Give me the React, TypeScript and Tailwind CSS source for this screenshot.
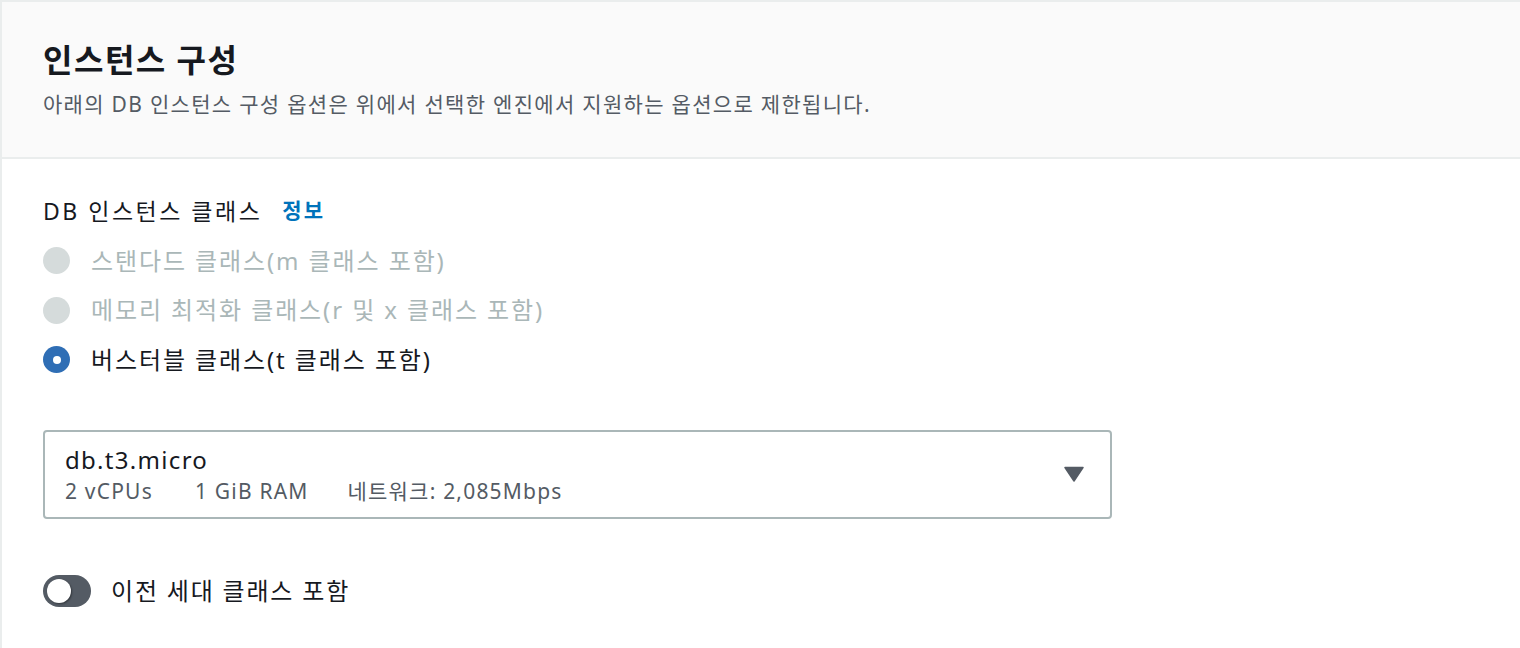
const font = 'font-["Noto_Sans","Noto_Sans_CJK_KR",sans-serif]'

const Radio = ({ label, checked, disabled }: { label: string; checked?: boolean; disabled?: boolean }) => (
    <div className="flex items-center h-[49.5px]">
        {checked ? (
            <span className="w-[27px] h-[27px] rounded-full bg-[#2f6eb5] flex items-center justify-center">
                <span className="w-[8px] h-[8px] rounded-full bg-white" />
            </span>
        ) : (
            <span className="w-[27px] h-[27px] rounded-full bg-[#d5dbdb]" />
        )}
        <span
            className={`ml-[21px] text-[24px] tracking-[1.9px] ${disabled ? 'text-[#aab7b8]' : 'text-[#16191f]'}`}
        >
            {label}
        </span>
    </div>
)

export default function App() {
    return (
        <div className={`${font} w-[1520px] h-[648px] bg-white border-l-2 border-t-2 border-[#eaeded] overflow-hidden`}>
            <header className="bg-[#fafafa] border-b-2 border-[#eaeded] h-[157px] pl-[41px] pt-[34px]">
                <h2 className="text-[32px] font-bold text-[#16191f] leading-[48px] tracking-[1.5px]">인스턴스 구성</h2>
                <p className="text-[21px] text-[#545b64] leading-[30px] mt-[5px] tracking-[1.3px]">
                    아래의 DB 인스턴스 구성 옵션은 위에서 선택한 엔진에서 지원하는 옵션으로 제한됩니다.
                </p>
            </header>

            <div className="pl-[41px] pt-[34px]">
                <div className="flex items-center h-[36px]">
                    <span className="text-[23px] text-[#16191f] tracking-[2.5px]">DB 인스턴스 클래스</span>
                    <span className="ml-[20px] text-[21px] font-bold text-[#0073bb] tracking-[2px]">정보</span>
                </div>
                <div className="flex flex-col mt-[7px]">
                    <Radio label="스탠다드 클래스(m 클래스 포함)" disabled />
                    <Radio label="메모리 최적화 클래스(r 및 x 클래스 포함)" disabled />
                    <Radio label="버스터블 클래스(t 클래스 포함)" checked />
                </div>

                <div className="mt-[45px] w-[1069px] h-[89px] border-2 border-[#aab7b8] rounded-[4px] flex items-center justify-between pl-[20px] pr-[26px]">
                    <div className="flex flex-col">
                        <span className="text-[24px] text-[#16191f] leading-[33px] tracking-[1.3px]">db.t3.micro</span>
                        <div className="flex text-[21px] text-[#545b64] leading-[30px] tracking-[1.2px]">
                            <span>2 vCPUs</span>
                            <span className="ml-[42px]">1 GiB RAM</span>
                            <span className="ml-[39px]">네트워크: 2,085Mbps</span>
                        </div>
                    </div>
                    <svg width="20" height="16" viewBox="0 0 20 16">
                        <path d="M1 1.5 H19 L10 15 Z" fill="#545b64" stroke="#545b64" strokeWidth="1.5" strokeLinejoin="round" />
                    </svg>
                </div>

                <div className="flex items-center mt-[54px]">
                    <span className="relative w-[48px] h-[32px] rounded-full bg-[#545b64]">
                        <span className="absolute left-[4px] top-[4px] w-[24px] h-[24px] rounded-full bg-white shadow-[1px_1px_2px_rgba(0,0,0,0.4)]" />
                    </span>
                    <span className="ml-[20px] text-[24px] text-[#16191f] tracking-[1.8px]">이전 세대 클래스 포함</span>
                </div>
            </div>
        </div>
    )
}
